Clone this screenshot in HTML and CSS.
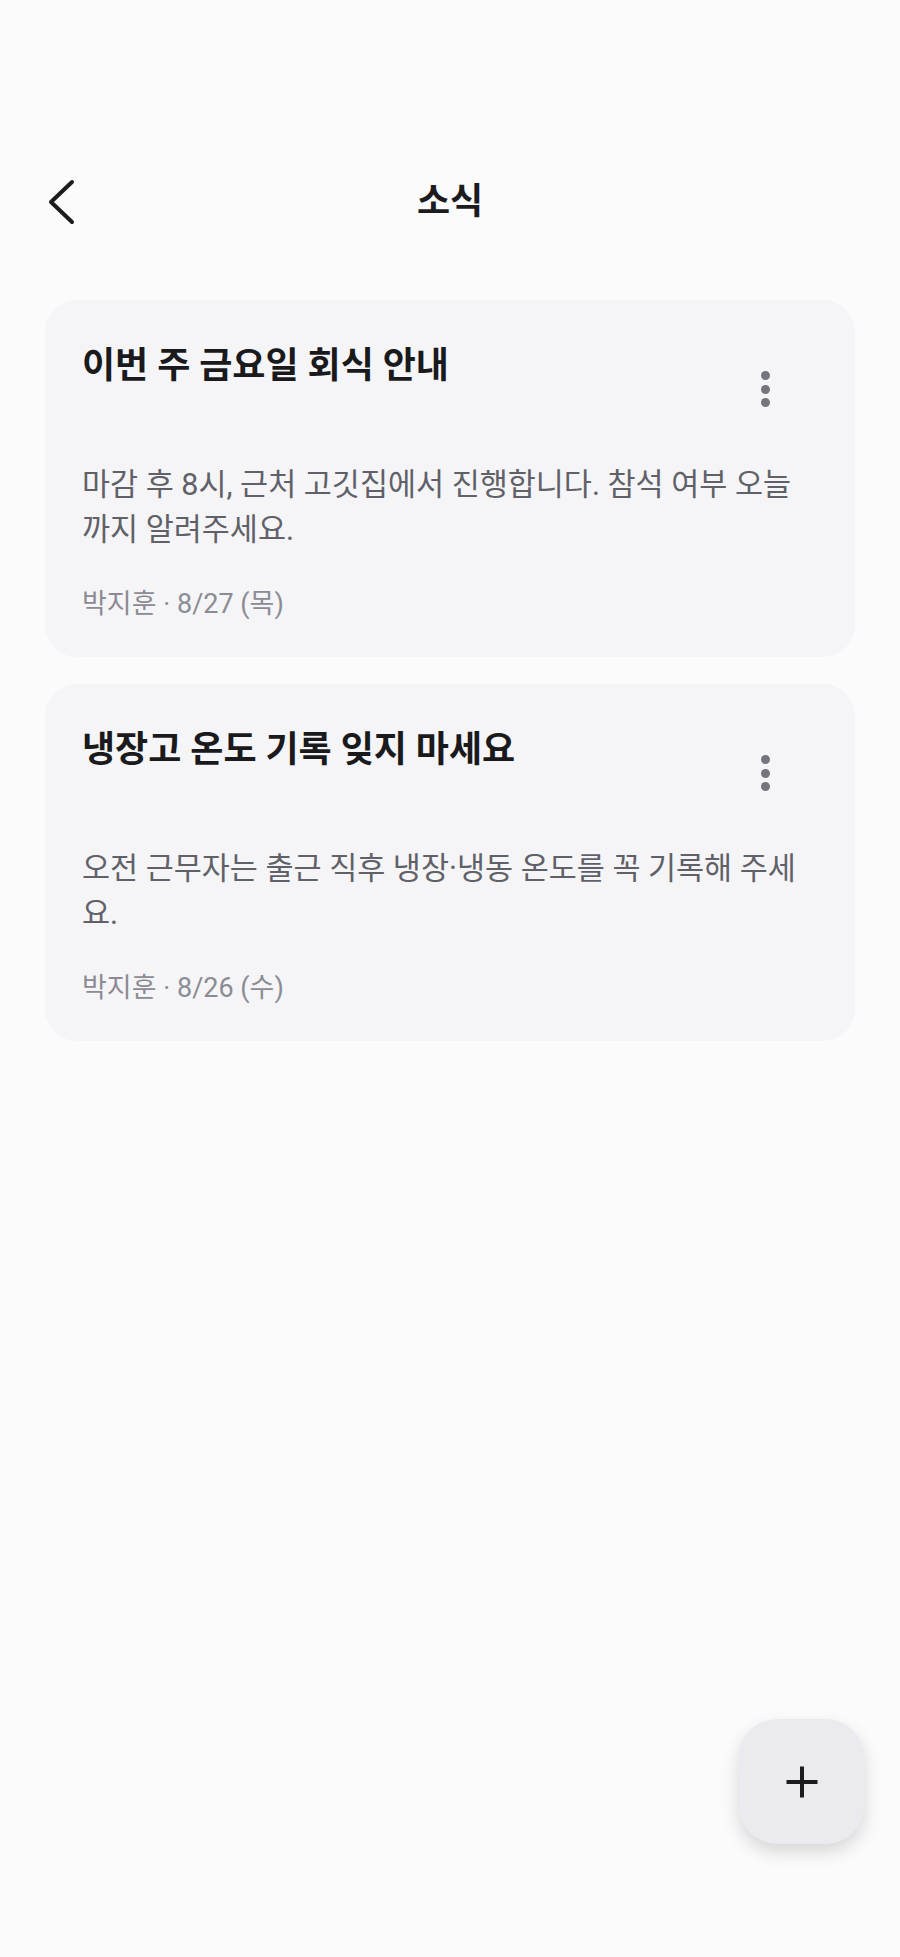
FILE: index.html
```html
<!DOCTYPE html>
<html lang="ko">
<head>
<meta charset="utf-8">
<title>소식</title>
<link rel="stylesheet" href="styles.css">
</head>
<body>
<div class="screen">
  <header class="appbar">
    <button class="back" aria-label="뒤로">
      <svg width="30" height="46" viewBox="0 0 30 46"><path d="M24 3 L3 23 L24 43" fill="none" stroke="#1c1c1e" stroke-width="4" stroke-linecap="round" stroke-linejoin="round"/></svg>
    </button>
    <h1 class="title">소식</h1>
    <div class="spacer"></div>
  </header>

  <main class="list">
    <article class="card">
      <div class="card-head">
        <h2 class="card-title">이번 주 금요일 회식 안내</h2>
        <button class="more" aria-label="더보기"><span></span><span></span><span></span></button>
      </div>
      <p class="card-body">마감 후 8시, 근처 고깃집에서 진행합니다. 참석 여부 오늘까지 알려주세요.</p>
      <p class="card-meta">박지훈 · 8/27 (목)</p>
    </article>
    <article class="card">
      <div class="card-head">
        <h2 class="card-title">냉장고 온도 기록 잊지 마세요</h2>
        <button class="more" aria-label="더보기"><span></span><span></span><span></span></button>
      </div>
      <p class="card-body">오전 근무자는 출근 직후 냉장·냉동 온도를 꼭 기록해 주세요.</p>
      <p class="card-meta">박지훈 · 8/26 (수)</p>
    </article>
  </main>

  <button class="fab" aria-label="추가">
    <svg width="34" height="34" viewBox="0 0 34 34"><path d="M17 1.5 V32.5 M1.5 17 H32.5" stroke="#1c1c1e" stroke-width="4"/></svg>
  </button>
</div>
</body>
</html>
```

FILE: styles.css
```css
* { box-sizing: border-box; }
html, body { margin: 0; padding: 0; }
body {
  background: #fbfbfb;
  font-family: Roboto, "Noto Sans CJK KR", sans-serif;
  color: #1c1c1e;
}
.screen {
  position: relative;
  height: 1957px;
  padding-top: 160px;
  overflow: hidden;
}

.appbar {
  display: grid;
  grid-template-columns: 1fr auto 1fr;
  align-items: center;
  height: 84px;
}
.back {
  justify-self: start;
  margin-left: 48px;
  background: none;
  border: 0;
  padding: 0;
  display: flex;
  cursor: pointer;
}
.title {
  margin: 0;
  font-size: 36px;
  line-height: 48px;
  font-weight: 700;
  color: #1c1c1e;
}

.list {
  display: flex;
  flex-direction: column;
  gap: 27px;
  padding: 56px 45px 0;
}
.card {
  background: #f5f5f7;
  border-radius: 32px;
  padding: 42px 37px 37px;
}
.card-head {
  display: flex;
  align-items: flex-start;
  gap: 16px;
}
.card-title {
  flex: 1;
  margin: 0;
  font-size: 36px;
  line-height: 48px;
  font-weight: 700;
  color: #1a1a1c;
}
.more {
  flex: none;
  width: 48px;
  height: 48px;
  margin: 23px 29px 0 0;
  background: none;
  border: 0;
  padding: 0;
  display: flex;
  flex-direction: column;
  align-items: center;
  justify-content: center;
  gap: 4.5px;
}
.more span {
  width: 9px;
  height: 9px;
  border-radius: 50%;
  background: #74767e;
}
.card-body {
  margin: 49px 16px 0 0;
  font-size: 30.5px;
  line-height: 45px;
  color: #606168;
}
.card-meta {
  margin: 36px 0 0;
  font-size: 27px;
  line-height: 32px;
  color: #8b8c93;
}

.fab {
  position: absolute;
  right: 36px;
  bottom: 113px;
  width: 125px;
  height: 125px;
  border-radius: 38px;
  border: 0;
  background: #ebebef;
  box-shadow: 0 8px 18px rgba(0, 0, 0, 0.15);
  display: flex;
  align-items: center;
  justify-content: center;
  padding: 0;
}
```
